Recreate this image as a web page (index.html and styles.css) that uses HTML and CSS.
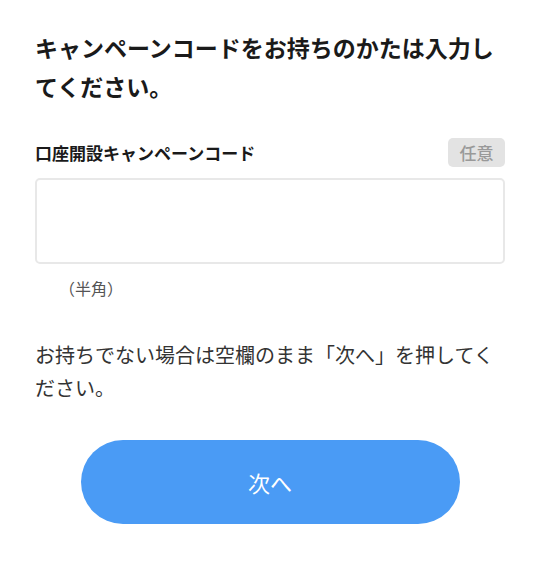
FILE: index.html
```html
<!DOCTYPE html>
<html lang="ja">
<head>
<meta charset="utf-8">
<title>キャンペーンコード</title>
<link rel="stylesheet" href="styles.css">
</head>
<body>
<main class="page">
  <h1 class="title">キャンペーンコードをお持ちのかたは入力してください。</h1>
  <div class="field">
    <div class="field-head">
      <label class="label" for="code">口座開設キャンペーンコード</label>
      <span class="badge">任意</span>
    </div>
    <input class="input" id="code" type="text">
    <p class="hint">（半角）</p>
  </div>
  <p class="note">お持ちでない場合は空欄のまま「次へ」を押してください。</p>
  <div class="actions">
    <button class="btn" type="button">次へ</button>
  </div>
</main>
</body>
</html>
```
FILE: styles.css
```css
* { box-sizing: border-box; }
html, body { margin: 0; padding: 0; background: #fff; }
body {
  font-family: "Noto Sans CJK JP", "Noto Sans", sans-serif;
  color: #222;
}
.page {
  width: 540px;
  padding: 28px 35px 0 35px;
}
.title {
  margin: 0;
  font-size: 23px;
  line-height: 39px;
  font-weight: 700;
  color: #1a1a1a;
}
.field {
  margin-top: 32px;
}
.field-head {
  display: flex;
  justify-content: space-between;
  align-items: center;
  height: 29px;
}
.label {
  font-size: 17px;
  font-weight: 700;
  color: #1a1a1a;
  line-height: 29px;
}
.badge {
  display: inline-flex;
  align-items: center;
  justify-content: center;
  width: 57px;
  height: 29px;
  border-radius: 5px;
  background: #e3e3e3;
  color: #999;
  font-size: 17px;
  font-weight: 500;
}
.input {
  display: block;
  width: 100%;
  height: 86px;
  margin-top: 11px;
  border: 2px solid #e8e8e8;
  border-radius: 5px;
  background: #fff;
  outline: none;
  font: inherit;
}
.hint {
  margin: 12px 0 0 0;
  padding-left: 24px;
  font-size: 16px;
  line-height: 24px;
  color: #555;
}
.note {
  margin: 38px 0 0 0;
  font-size: 20px;
  line-height: 33px;
  color: #333;
}
.actions {
  display: flex;
  justify-content: center;
  margin-top: 36px;
}
.btn {
  width: 379px;
  height: 84px;
  border: none;
  border-radius: 42px;
  background: #4a9bf5;
  color: #fff;
  font-family: inherit;
  font-size: 22px;
  font-weight: 400;
}
```
